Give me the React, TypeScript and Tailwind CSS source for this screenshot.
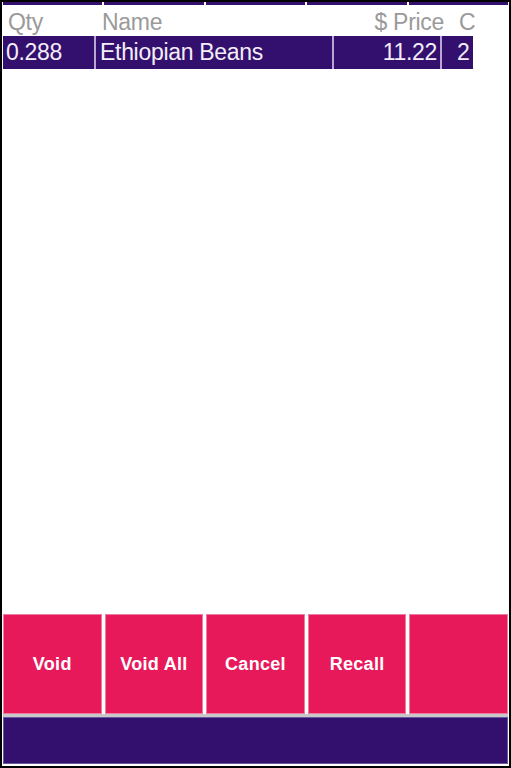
export default function App() {
  const buttons = ['Void', 'Void All', 'Cancel', 'Recall', '']
  return (
    <div
      className="w-[511px] h-[768px] border-2 border-black bg-white flex flex-col"
      style={{ fontFamily: '"Liberation Sans", Arial, sans-serif' }}
    >
      {/* cut-off tab strip */}
      <div className="h-[3px] flex gap-[2px] px-[1px]">
        {[0, 1, 2, 3, 4].map((i) => (
          <div key={i} className="flex-1 bg-[#33106e]" />
        ))}
      </div>

      <div className="flex flex-col pl-[1px] pt-[3px]">
        <div className="flex h-[28px] items-center text-[23px] text-[#9a9a9a] leading-none tracking-[-0.3px]">
          <div className="w-[94px] pl-[5px]">Qty</div>
          <div className="w-[238px] pl-[5px]">Name</div>
          <div className="w-[110px] text-right pr-[1px]">$ Price</div>
          <div className="w-[32px] pl-[14px]">C</div>
        </div>
        <div className="flex h-[33px] text-[23px] text-[#f3eef8] leading-none tracking-[-0.3px]">
          <div className="w-[93px] bg-[#33106e] border-r-2 border-[#b9a7d3] flex items-center pl-[3px]">0.288</div>
          <div className="w-[238px] bg-[#33106e] border-r-2 border-[#b9a7d3] flex items-center pl-[4px]">Ethiopian Beans</div>
          <div className="w-[108px] bg-[#33106e] border-r-2 border-[#b9a7d3] flex items-center justify-end pr-[3px]">11.22</div>
          <div className="w-[31px] bg-[#33106e] flex items-center pl-[15px]">2</div>
        </div>
      </div>

      <div className="flex-1" />

      <div className="flex gap-[3px] px-[1px] h-[100px]">
        {buttons.map((b, i) => (
          <div
            key={i}
            className="flex-1 bg-[#e8195a] border border-[#f07aa0] flex items-center justify-center text-white font-bold text-[18px] tracking-[0.3px]"
          >
            {b}
          </div>
        ))}
      </div>
      <div className="h-[3px] mx-[1px] bg-[#c8c8c8]" />
      <div className="h-[47px] mx-[1px] mb-[2px] bg-[#33106e] border border-[#6a55a0]" />
    </div>
  )
}
